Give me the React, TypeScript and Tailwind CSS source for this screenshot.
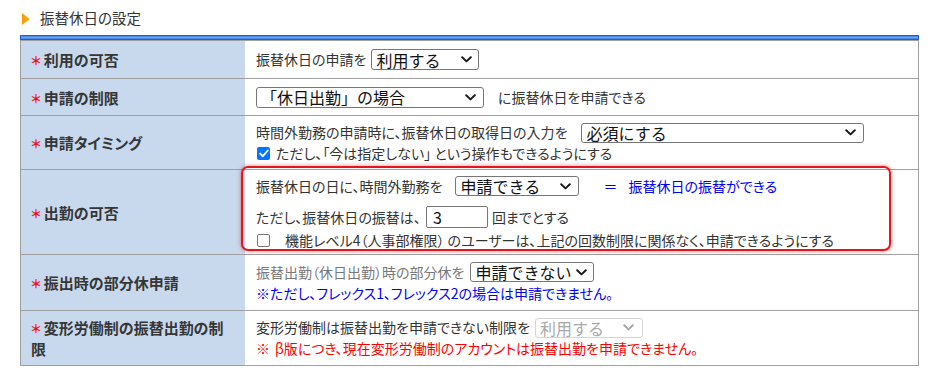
import React from "react";

function Chevron({ color = "#1a1a1a" }: { color?: string }) {
  return (
    <svg width="11" height="7" viewBox="0 0 11 7" className="shrink-0">
      <path d="M1.2 1.2 L5.5 5.4 L9.8 1.2" stroke={color} strokeWidth="2" fill="none" strokeLinecap="round" strokeLinejoin="round" />
    </svg>
  );
}

function Sel({ text, cls, disabled }: { text: string; cls: string; disabled?: boolean }) {
  return (
    <span
      className={
        "inline-flex items-center justify-between rounded-[3px] border bg-white pl-[4px] text-[16px] leading-none [font-feature-settings:normal] " +
        (disabled ? "border-[#d4d4d4] text-[#a8a8a8] bg-[#fafafa] " : "border-[#767676] text-[#111] ") +
        cls
      }
    >
      <span className="whitespace-nowrap">{text}</span>
      <Chevron color={disabled ? "#a8a8a8" : "#1a1a1a"} />
    </span>
  );
}

function Label({ children }: { children: React.ReactNode }) {
  return (
    <div className="w-[224px] shrink-0 self-stretch bg-[#c8d9ee] pl-[10px] pr-[12px] flex items-center">
      <div className="text-[15px] font-bold leading-[21px] text-[#363636]">
        <span className="text-[12px] leading-[12px] text-[#ee1111] mr-[3px]">＊</span>
        {children}
      </div>
    </div>
  );
}

export default function App() {
  return (
    <div className="w-[934px] h-[380px] bg-white font-['Noto_Sans_CJK_JP','Noto_Sans',sans-serif] [font-feature-settings:'palt'] text-[14px] text-[#333]">
      <div className="pl-[20px]">
        <div className="h-[35px] flex items-center">
          <svg width="8" height="12" viewBox="0 0 8 12" className="ml-[2px] mt-[3px]">
            <defs>
              <linearGradient id="tri" x1="0" y1="0" x2="1" y2="0">
                <stop offset="0" stopColor="#f59a00" />
                <stop offset="1" stopColor="#f7b733" />
              </linearGradient>
            </defs>
            <path d="M0 0 L8 6 L0 12 Z" fill="url(#tri)" />
          </svg>
          <span className="ml-[10px] text-[14.5px] text-[#333]">振替休日の設定</span>
        </div>
        <div className="w-[899px] h-[5px] border border-[#1c5fd6] bg-[linear-gradient(#3c7fe6,#6fa3f0_50%,#3c7fe6)]" />
        <div className="w-[899px] border border-[#a0a0a0]">
          {/* row 1 */}
          <div className="flex h-[38px] border-b border-[#a0a0a0]">
            <Label>利用の可否</Label>
            <div className="flex items-center pl-[11px]">
              <span>振替休日の申請を</span>
              <Sel text="利用する" cls="ml-[5px] w-[108px] h-[21px] pr-[6px]" />
            </div>
          </div>
          {/* row 2 */}
          <div className="flex h-[37px] border-b border-[#a0a0a0]">
            <Label>申請の制限</Label>
            <div className="flex items-center pl-[11px]">
              <Sel text="「休日出勤」の場合" cls="w-[228px] h-[21px] pr-[7px]" />
              <span className="ml-[14px]">に振替休日を申請できる</span>
            </div>
          </div>
          {/* row 3 */}
          <div className="flex h-[54px] border-b border-[#a0a0a0]">
            <Label>申請タイミング</Label>
            <div className="flex flex-col justify-center pl-[11px]">
              <div className="flex items-center h-[21px]">
                <span>時間外勤務の申請時に、振替休日の取得日の入力を</span>
                <Sel text="必須にする" cls="ml-[14px] w-[283px] h-[20px] pr-[7px]" />
              </div>
              <div className="flex items-center h-[20px]">
                <span className="ml-[1px] w-[13px] h-[13px] rounded-[2px] bg-[#0075ff] flex items-center justify-center">
                  <svg width="10" height="9" viewBox="0 0 10 9">
                    <path d="M1.2 4.6 L3.9 7.2 L8.8 1.5" stroke="#fff" strokeWidth="1.9" fill="none" strokeLinecap="round" strokeLinejoin="round" />
                  </svg>
                </span>
                <span className="ml-[6px]">ただし、「今は指定しない」 という操作もできるようにする</span>
              </div>
            </div>
          </div>
          {/* row 4 */}
          <div className="flex h-[85px] border-b border-[#a0a0a0]">
            <Label>出勤の可否</Label>
            <div className="flex items-start">
              <div className="-ml-[4px] -mt-[4px] w-[650px] h-[85px] border-2 border-[#e8141c] rounded-[7px] shadow-[0_0_4px_rgba(230,0,0,0.5)] pl-[13px] pt-[8px] flex flex-col">
                <div className="flex items-center h-[20px]">
                  <span>振替休日の日に、時間外勤務を</span>
                  <Sel text="申請できる" cls="ml-[13px] w-[124px] h-[20px] pr-[7px]" />
                  <span className="ml-[24px] text-[#0000ff]">＝</span>
                  <span className="ml-[11px] text-[#0000ff]">振替休日の振替ができる</span>
                </div>
                <div className="flex items-center h-[22px] mt-[10px]">
                  <span>ただし、振替休日の振替は、</span>
                  <span className="ml-[5px] w-[62px] h-[22px] border border-[#767676] rounded-[2px] flex items-center pl-[6px] text-[16px] text-[#111]">3</span>
                  <span className="ml-[4px]">回までとする</span>
                </div>
                <div className="flex items-center h-[18px] mt-[3px]">
                  <span className="ml-[1px] w-[13px] h-[13px] rounded-[2px] border border-[#767676] bg-white" />
                  <span className="ml-[15px]">機能レベル4（人事部権限） のユーザーは、上記の回数制限に関係なく、申請できるようにする</span>
                </div>
              </div>
            </div>
          </div>
          {/* row 5 */}
          <div className="flex h-[56px] border-b border-[#a0a0a0]">
            <Label>振出時の部分休申請</Label>
            <div className="flex flex-col justify-center pl-[11px]">
              <div className="flex items-center h-[21px]">
                <span className="text-[#777]">振替出勤（休日出勤）時の部分休を</span>
                <Sel text="申請できない" cls="ml-[6px] w-[124px] h-[20px] pr-[6px]" />
              </div>
              <div className="h-[21px] flex items-center text-[#0000ff]">※ただし、フレックス1、フレックス2の場合は申請できません。</div>
            </div>
          </div>
          {/* row 6 */}
          <div className="flex h-[54px]">
            <Label>
              <span>変形労働制の振替出勤の制</span>
              <br />
              <span>限</span>
            </Label>
            <div className="flex flex-col justify-center pl-[11px]">
              <div className="flex items-center h-[21px]">
                <span>変形労働制は振替出勤を申請できない制限を</span>
                <Sel text="利用する" cls="ml-[5px] w-[108px] h-[20px] pr-[8px]" disabled />
              </div>
              <div className="h-[21px] flex items-center text-[#ff0000]">
                <span>※</span>
                <span className="ml-[5px]">β版につき、現在変形労働制のアカウントは振替出勤を申請できません。</span>
              </div>
            </div>
          </div>
        </div>
      </div>
    </div>
  );
}
